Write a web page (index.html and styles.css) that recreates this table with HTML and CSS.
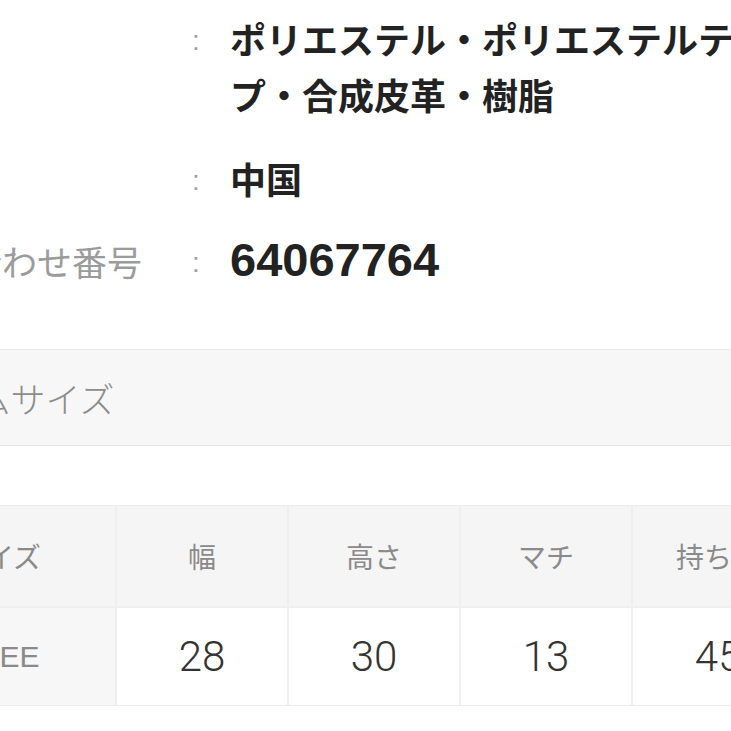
FILE: index.html
```html
<!DOCTYPE html>
<html lang="ja">
<head>
<meta charset="utf-8">
<title>商品詳細</title>
<link rel="stylesheet" href="styles.css">
</head>
<body>
<div class="page">
  <dl class="spec">
    <div class="spec-row r1">
      <dt class="label">素材</dt>
      <dd class="colon">:</dd>
      <dd class="val">ポリエステル・ポリエステルテープ・合成皮革・樹脂</dd>
    </div>
    <div class="spec-row r2">
      <dt class="label">原産国</dt>
      <dd class="colon">:</dd>
      <dd class="val">中国</dd>
    </div>
    <div class="spec-row last">
      <dt class="label">お問い合わせ番号</dt>
      <dd class="colon">:</dd>
      <dd class="val num">64067764</dd>
    </div>
  </dl>

  <div class="size-head">アイテムサイズ</div>

  <div class="size-table">
    <div class="cell th">サイズ</div>
    <div class="cell th">幅</div>
    <div class="cell th">高さ</div>
    <div class="cell th">マチ</div>
    <div class="cell th">持ち手</div>
    <div class="cell td first">FREE</div>
    <div class="cell td">28</div>
    <div class="cell td">30</div>
    <div class="cell td">13</div>
    <div class="cell td">45</div>
  </div>
</div>
</body>
</html>
```

FILE: styles.css
```css
html, body {
  margin: 0;
  padding: 0;
  overflow: hidden;
  background: #fff;
}

body {
  width: 731px;
  height: 731px;
  font-family: "Noto Sans CJK JP", "Noto Sans", sans-serif;
}

.page {
  padding-top: 10px;
}

.spec {
  margin: 0 0 0 -138px;
}

.spec-row {
  display: grid;
  grid-template-columns: 328px 40px 550px;
  align-items: baseline;
  line-height: 56px;
}

.spec-row.r1 {
  margin-bottom: 28px;
}

.spec-row.r2 {
  margin-bottom: 19px;
}

.label {
  margin: 0;
  font-size: 35px;
  color: #9b9b9b;
  white-space: nowrap;
}

.colon {
  margin: 0;
  padding-left: 2px;
  font-family: "Liberation Sans", sans-serif;
  font-size: 28px;
  color: #a0a0a0;
  position: relative;
  top: -4px;
}

.val {
  margin: 0;
  font-size: 36px;
  font-weight: 700;
  color: #222;
}

.val.num {
  font-family: "Liberation Sans", sans-serif;
  font-size: 47px;
}

.size-head {
  margin: 54px 0 0 -160px;
  height: 95px;
  padding-left: 34px;
  display: flex;
  align-items: center;
  background: #f7f7f7;
  border-top: 1px solid #e6e6e6;
  border-bottom: 1px solid #e6e6e6;
  font-size: 35px;
  font-weight: 300;
  color: #8c8c8c;
}

.size-table {
  margin: 59px 0 0 -116px;
  width: max-content;
  display: grid;
  grid-template-columns: 231px repeat(4, 170px);
  gap: 2px;
  background: #efefef;
  border-top: 1px solid #ebebeb;
  border-bottom: 1px solid #ebebeb;
}

.cell {
  display: flex;
  align-items: center;
  justify-content: center;
}

.th {
  height: 100px;
  background: #f5f5f5;
  color: #8a8a8a;
  font-size: 28px;
}

.td {
  height: 97px;
  background: #fff;
  color: #333;
  font-family: Roboto, "Liberation Sans", sans-serif;
  font-weight: 300;
  font-size: 42px;
}

.td.first {
  background: #f7f7f7;
  color: #8a8a8a;
  font-family: "Liberation Sans", sans-serif;
  font-weight: 400;
  font-size: 30px;
}
```
